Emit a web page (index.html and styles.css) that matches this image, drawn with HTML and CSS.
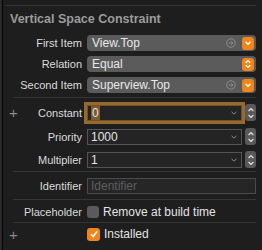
FILE: index.html
```html
<!DOCTYPE html>
<html lang="en">
<head>
    <meta charset="UTF-8">
    <title>Vertical Space Constraint</title>
    <link rel="stylesheet" href="styles.css">
</head>
<body>
    <div class="panel">
        <div class="title">Vertical Space Constraint</div>

        <div class="row">
            <div class="label">First Item</div>
            <div class="popup">
                <span class="popup-text">View.Top</span>
                <svg class="goto" width="10" height="10" viewBox="0 0 10 10">
                    <circle cx="5" cy="5" r="4.2" fill="none" stroke="#8e8e8e" stroke-width="1"/>
                    <path d="M3 5h4M5.2 3.2L7 5L5.2 6.8" fill="none" stroke="#8e8e8e" stroke-width="1"/>
                </svg>
                <span class="popup-btn">
                    <svg width="8" height="6" viewBox="0 0 8 6"><path d="M1.5 1.8L4 4.2L6.5 1.8" fill="none" stroke="#fff" stroke-width="1.4"/></svg>
                </span>
            </div>
        </div>

        <div class="row">
            <div class="label">Relation</div>
            <div class="popup">
                <span class="popup-text">Equal</span>
                <span class="popup-btn">
                    <svg width="8" height="10" viewBox="0 0 8 10"><path d="M1.8 3.8L4 1.6L6.2 3.8M1.8 6.2L4 8.4L6.2 6.2" fill="none" stroke="#fff" stroke-width="1.3"/></svg>
                </span>
            </div>
        </div>

        <div class="row">
            <div class="label">Second Item</div>
            <div class="popup">
                <span class="popup-text">Superview.Top</span>
                <svg class="goto" width="10" height="10" viewBox="0 0 10 10">
                    <circle cx="5" cy="5" r="4.2" fill="none" stroke="#8e8e8e" stroke-width="1"/>
                    <path d="M3 5h4M5.2 3.2L7 5L5.2 6.8" fill="none" stroke="#8e8e8e" stroke-width="1"/>
                </svg>
                <span class="popup-btn">
                    <svg width="8" height="6" viewBox="0 0 8 6"><path d="M1.5 1.8L4 4.2L6.5 1.8" fill="none" stroke="#fff" stroke-width="1.4"/></svg>
                </span>
            </div>
        </div>

        <div class="sep"></div>

        <div class="row">
            <div class="label"><span class="plus">+</span>Constant</div>
            <div class="combo-wrap">
                <div class="combo focused">
                    <span class="combo-text"><span class="selected">0</span></span>
                    <svg class="chev" width="8" height="6" viewBox="0 0 8 6"><path d="M1.5 1.8L4 4.2L6.5 1.8" fill="none" stroke="#8c8c8c" stroke-width="1"/></svg>
                </div>
                <span class="stepper">
                    <svg width="8" height="14" viewBox="0 0 8 14"><path d="M1.6 5L4 2.6L6.4 5M1.6 9L4 11.4L6.4 9" fill="none" stroke="#e6e6e6" stroke-width="1.2"/></svg>
                </span>
            </div>
        </div>

        <div class="row row-priority">
            <div class="label">Priority</div>
            <div class="combo-wrap">
                <div class="combo">
                    <span class="combo-text">1000</span>
                    <svg class="chev" width="8" height="6" viewBox="0 0 8 6"><path d="M1.5 1.8L4 4.2L6.5 1.8" fill="none" stroke="#8c8c8c" stroke-width="1"/></svg>
                </div>
                <span class="stepper">
                    <svg width="8" height="14" viewBox="0 0 8 14"><path d="M1.6 5L4 2.6L6.4 5M1.6 9L4 11.4L6.4 9" fill="none" stroke="#e6e6e6" stroke-width="1.2"/></svg>
                </span>
            </div>
        </div>

        <div class="row row-multiplier">
            <div class="label">Multiplier</div>
            <div class="combo-wrap">
                <div class="combo">
                    <span class="combo-text">1</span>
                    <svg class="chev" width="8" height="6" viewBox="0 0 8 6"><path d="M1.5 1.8L4 4.2L6.5 1.8" fill="none" stroke="#8c8c8c" stroke-width="1"/></svg>
                </div>
                <span class="stepper">
                    <svg width="8" height="14" viewBox="0 0 8 14"><path d="M1.6 5L4 2.6L6.4 5M1.6 9L4 11.4L6.4 9" fill="none" stroke="#e6e6e6" stroke-width="1.2"/></svg>
                </span>
            </div>
        </div>

        <div class="sep"></div>

        <div class="row">
            <div class="label">Identifier</div>
            <div class="textfield"><span class="placeholder">Identifier</span></div>
        </div>

        <div class="sep sep-loose"></div>

        <div class="row row-check">
            <div class="label">Placeholder</div>
            <label class="check">
                <span class="box"></span>
                <span>Remove at build time</span>
            </label>
        </div>

        <div class="sep sep-last"></div>

        <div class="row row-check">
            <div class="label"><span class="plus">+</span></div>
            <label class="check">
                <span class="box on">
                    <svg width="10" height="10" viewBox="0 0 10 10"><path d="M2 5.2L4.2 7.6L8.2 2.2" fill="none" stroke="#fff" stroke-width="1.6"/></svg>
                </span>
                <span>Installed</span>
            </label>
        </div>
    </div>
</body>
</html>
```

FILE: styles.css
```css
body {
    margin: 0;
    background-color: #2a2a2a;
    font-family: 'Liberation Sans', 'Arial', sans-serif;
    height: 250px;
    overflow: hidden;
}

.panel {
    margin-left: 2px;
    height: 250px;
    border-left: 1px solid #000;
    background-color: #1e1e1f;
    padding: 5px 6px 0 0;
    box-sizing: border-box;
}

.title {
    border-top: 1px solid #353535;
    margin-left: 2px;
    padding: 6px 0 0 5px;
    font-size: 12.5px;
    font-weight: bold;
    color: #9b9b9b;
    height: 23px;
}

.row {
    display: grid;
    grid-template-columns: 79px 1fr;
    column-gap: 5px;
    align-items: center;
    height: 16px;
}

.row + .row {
    margin-top: 5px;
}

.row-priority.row {
    margin-top: 8px;
}

.row-multiplier.row {
    margin-top: 7px;
}

.label {
    display: flex;
    justify-content: flex-end;
    align-items: center;
    font-size: 11px;
    color: #dcdcdc;
    position: relative;
}

.plus {
    position: absolute;
    left: 6px;
    font-size: 15px;
    color: #8a8a8a;
    font-weight: 300;
}

.popup {
    display: flex;
    align-items: center;
    height: 16px;
    background-color: #5b5b5c;
    border-radius: 4px;
    padding-left: 5px;
    color: #e8e8e8;
    font-size: 12px;
}

.popup-text {
    flex: 1;
}

.goto {
    margin-right: 6px;
}

.popup-btn {
    display: flex;
    align-items: center;
    justify-content: center;
    width: 12px;
    height: 13px;
    margin-right: 2px;
    background-color: #f0851b;
    border-radius: 3px;
}

.sep {
    height: 1px;
    background-color: #353535;
    margin: 4px 0 6px 10px;
}

.sep-loose {
    margin-top: 5px;
    margin-bottom: 5px;
}

.sep-last {
    margin-top: 5px;
    margin-bottom: 4px;
}

.combo-wrap {
    display: flex;
    align-items: center;
    gap: 3px;
}

.combo {
    flex: 1;
    display: flex;
    align-items: center;
    height: 14px;
    border: 1px solid #545454;
    background-color: #242425;
    padding-left: 3px;
    padding-right: 3px;
    color: #e4e4e4;
    font-size: 12px;
}

.combo.focused {
    outline: 3px solid #976a2c;
    border-color: #6b5330;
}

.combo-text {
    flex: 1;
    display: flex;
}

.selected {
    background-color: #7c5a32;
    padding: 0 1px;
    height: 14px;
    line-height: 14px;
}

.stepper {
    display: flex;
    align-items: center;
    justify-content: center;
    width: 11px;
    height: 17px;
    background-color: #59595a;
    border-radius: 3px;
}

.textfield {
    height: 14px;
    border: 1px solid #4a4a4a;
    background-color: #262627;
    padding-left: 3px;
    display: flex;
    align-items: center;
    font-size: 12px;
}

.placeholder {
    color: #5e5e5e;
}

.row-check {
    height: 12px;
}

.row-check:last-child {
    height: 13px;
}

.check {
    display: flex;
    align-items: center;
    gap: 4px;
    font-size: 12px;
    color: #e4e4e4;
}

.box {
    display: flex;
    align-items: center;
    justify-content: center;
    width: 12px;
    height: 12px;
    border-radius: 3px;
    background-color: #5a5a5b;
}

.box.on {
    width: 13px;
    height: 13px;
    background-color: #f0851b;
}
```
